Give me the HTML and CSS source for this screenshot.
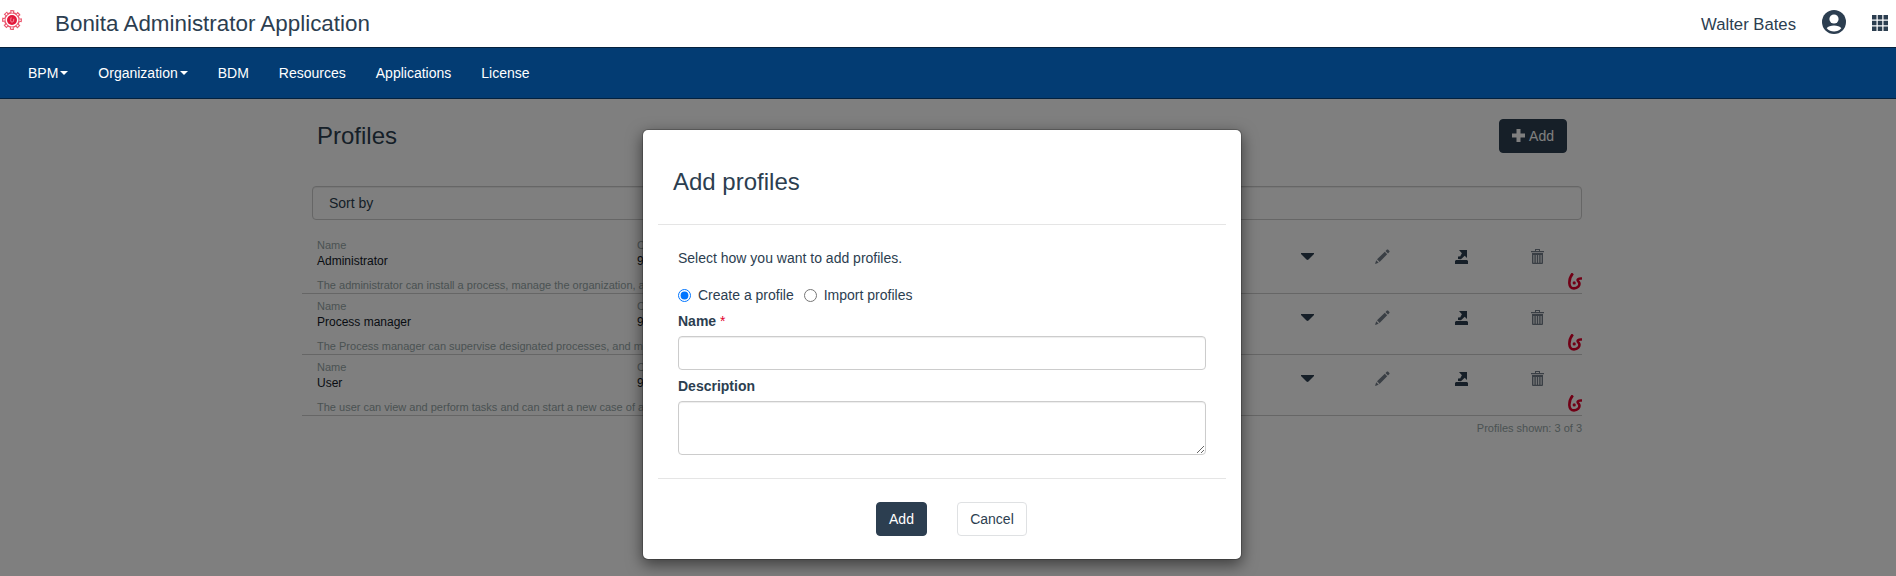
FILE: index.html
```html
<!DOCTYPE html>
<html lang="en">
<head>
<meta charset="utf-8">
<title>Bonita Administrator Application</title>
<link rel="stylesheet" href="styles.css">
</head>
<body>
<svg width="0" height="0" class="defs" aria-hidden="true">
  <symbol id="i-caret" viewBox="0 0 13 7"><path d="M0 0H13V1L7.5 6.5Q6.5 7.3 5.5 6.5L0 1Z"/></symbol>
  <symbol id="i-pencil" viewBox="0 0 15 15"><path d="M0 15L1.2 11.3L3.7 13.8ZM2 10.3L9.8 2.8L12.2 5.2L4.6 13ZM10.5 2L12 .6Q12.5 .2 13 .6L14.4 2Q14.8 2.5 14.4 3L13 4.5Z"/></symbol>
  <symbol id="i-export" viewBox="0 0 13 14"><path d="M4 0H12V8L9.7 5.8L6.8 8.6L5.9 9.2L3 9V7L4 6L5 6.8L6.9 3.2ZM1 10H12L13 11V14H0V11Z"/></symbol>
  <symbol id="i-trash" viewBox="0 0 13 15"><path fill-rule="evenodd" d="M4 0H9V2H13V3.2H0V2H4ZM5 1V2H8V1ZM1 4H12V14Q12 15 11 15H2Q1 15 1 14ZM2.4 6V13.8H3.4V6ZM4.8 6V13.8H5.8V6ZM7.2 6V13.8H8.2V6ZM9.6 6V13.8H10.6V6Z"/></symbol>
  <symbol id="i-bonita" viewBox="0 0 14 17"><path d="M4.8 .3C2.2 3.4 1.2 7 1.4 10.5C1.6 14 3.6 15.4 6 15.4C9.6 15.4 12 12.6 11.3 9.9C10.8 8.4 9.5 8 9.6 6.9C9.8 5.6 11.5 5.3 14 5.5" fill="none" stroke="#e3002b" stroke-width="2.6"/><circle cx="6.2" cy="9.9" r="1.6" fill="#e3002b"/></symbol>
</svg>

<header class="header">
  <svg class="logo" viewBox="0 0 20 20"><g fill="none"><circle cx="10" cy="10" r="8.6" stroke="#ea536b" stroke-width="2.6" stroke-dasharray="3.95 2.804" stroke-dashoffset="1.97"/><circle cx="10" cy="10" r="7.2" stroke="#ea536b" stroke-width="1.5"/><circle cx="10" cy="10" r="8" stroke="#fff" stroke-width="1.4" stroke-dasharray="1.7 4.583" stroke-dashoffset=".85"/></g><circle cx="10" cy="10" r="5" fill="#e2183b"/><path d="M9.2 7.5Q7.8 12 10 12.2T11.8 8.8" fill="none" stroke="#f28b9c" stroke-width="1"/></svg>
  <h1 class="app-title">Bonita Administrator Application</h1>
  <span class="user">Walter Bates</span>
  <svg class="avatar" viewBox="0 0 24 24"><circle cx="12" cy="12" r="12"/><circle cx="12" cy="9" r="4.6" fill="#fff"/><path d="M4.7 18.3C7 14.7 17 14.7 19.3 18.3C15.5 22.6 8.5 22.6 4.7 18.3Z" fill="#fff"/></svg>
  <svg class="apps" viewBox="0 0 16 16"><path d="M0 0h4.5v4.5H0zM5.75 0h4.5v4.5h-4.5zM11.5 0H16v4.5h-4.5zM0 5.75h4.5v4.5H0zM5.75 5.75h4.5v4.5h-4.5zM11.5 5.75H16v4.5h-4.5zM0 11.5h4.5V16H0zM5.75 11.5h4.5V16h-4.5zM11.5 11.5H16V16h-4.5z"/></svg>
</header>

<nav class="nav">
  <a>BPM<i class="caret"></i></a>
  <a>Organization<i class="caret"></i></a>
  <a>BDM</a>
  <a>Resources</a>
  <a>Applications</a>
  <a>License</a>
</nav>

<main class="page">
  <div class="content">
    <div class="toolbar">
      <h2 class="heading">Profiles</h2>
      <button class="btn primary add-profile"><svg class="plus" viewBox="0 0 13 13"><path d="M4.5 0h4v4.5H13v4H8.5V13h-4V8.5H0v-4h4.5z"/></svg>Add</button>
    </div>
    <div class="sort">Sort by</div>

    <div class="row">
      <div class="cell"><span class="label">Name</span><span>Administrator</span></div>
      <div class="cell"><span class="label">Created on</span><span>9</span></div>
      <svg class="icon caret-icon"><use href="#i-caret"/></svg>
      <svg class="icon pencil"><use href="#i-pencil"/></svg>
      <svg class="icon export"><use href="#i-export"/></svg>
      <svg class="icon trash"><use href="#i-trash"/></svg>
      <svg class="brand"><use href="#i-bonita"/></svg>
      <p class="desc">The administrator can install a process, manage the organization, a</p>
    </div>
    <div class="row">
      <div class="cell"><span class="label">Name</span><span>Process manager</span></div>
      <div class="cell"><span class="label">Created on</span><span>9</span></div>
      <svg class="icon caret-icon"><use href="#i-caret"/></svg>
      <svg class="icon pencil"><use href="#i-pencil"/></svg>
      <svg class="icon export"><use href="#i-export"/></svg>
      <svg class="icon trash"><use href="#i-trash"/></svg>
      <svg class="brand"><use href="#i-bonita"/></svg>
      <p class="desc">The Process manager can supervise designated processes, and m</p>
    </div>
    <div class="row">
      <div class="cell"><span class="label">Name</span><span>User</span></div>
      <div class="cell"><span class="label">Created on</span><span>9</span></div>
      <svg class="icon caret-icon"><use href="#i-caret"/></svg>
      <svg class="icon pencil"><use href="#i-pencil"/></svg>
      <svg class="icon export"><use href="#i-export"/></svg>
      <svg class="icon trash"><use href="#i-trash"/></svg>
      <svg class="brand"><use href="#i-bonita"/></svg>
      <p class="desc">The user can view and perform tasks and can start a new case of a</p>
    </div>
    <p class="count">Profiles shown: 3 of 3</p>
  </div>

  <div class="backdrop">
    <form class="modal">
      <h3 class="modal-title">Add profiles</h3>
      <div class="modal-body">
        <p class="hint">Select how you want to add profiles.</p>
        <div class="options">
          <label class="option"><input type="radio" name="mode" checked>Create a profile</label>
          <label class="option"><input type="radio" name="mode">Import profiles</label>
        </div>
        <label class="field-label" for="name">Name <span class="required">*</span></label>
        <input class="control" id="name" type="text">
        <label class="field-label second" for="description">Description</label>
        <textarea class="control area" id="description"></textarea>
      </div>
      <div class="modal-footer">
        <button type="button" class="btn primary">Add</button>
        <button type="button" class="btn cancel">Cancel</button>
      </div>
    </form>
  </div>
</main>
</body>
</html>
```
FILE: styles.css
```css
* { box-sizing: border-box; }
body {
  margin: 0;
  height: 576px;
  overflow: hidden;
  display: flex;
  flex-direction: column;
  background: #fff;
  color: #2c3e50;
  font: 14px/20px "Liberation Sans", Arial, sans-serif;
}
h1, h2, h3, p { margin: 0; font-weight: 400; }
svg { display: block; fill: #2c3e50; flex: none; }
.defs { position: absolute; }

.header { height: 47px; display: flex; align-items: flex-start; padding: 0 8px 0 0; }
.logo { width: 20px; height: 20px; margin: 10px 0 0 2px; }
.app-title { margin: 11px auto 0 33px; font-size: 22.4px; line-height: 25px; }
.user { margin-top: 15px; font-size: 16.7px; }
.avatar { width: 24px; height: 24px; margin: 10px 26px 0 26px; }
.apps { width: 16px; height: 16px; margin-top: 15px; }

.nav {
  height: 52px;
  display: flex;
  align-items: center;
  padding-left: 13px;
  background: #033c73;
  border: solid #04223f;
  border-width: 1px 0;
  color: #fff;
}
.nav a { display: flex; align-items: center; padding: 0 15px; }
.caret { border: 4px solid transparent; border-top-color: #fff; border-bottom: 0; margin-left: 2px; }

.page { position: relative; flex: 1; }
.content { width: 1280px; margin-left: 302px; }
.toolbar { height: 87px; display: flex; justify-content: space-between; padding: 20px 15px 0; }
.heading { font-size: 24px; line-height: 26px; margin-top: 4px; }
.btn {
  height: 34px;
  padding: 0 12px;
  border: 1px solid #dfe1e3;
  border-radius: 4px;
  background: #fff;
  color: #2c3e50;
  font: inherit;
}
.primary { background: #2c3e50; border-color: #2c3e50; color: #fff; }
.cancel { width: 70px; }
.add-profile { display: flex; align-items: center; gap: 4px; }
.plus { width: 13px; height: 13px; fill: #fff; margin-top: -1px; }
.sort {
  height: 34px;
  margin-left: 10px;
  padding: 6px 16px;
  border: 1px solid #ccc;
  border-radius: 4px;
  box-shadow: inset 0 1px 1px rgba(0, 0, 0, .075);
  margin-bottom: 13px;
}
.row {
  height: 61px;
  display: grid;
  grid-template: 40px 16px / 320px 664px 74px 80px 76px 37px 14px;
  padding: 4px 0 0 15px;
  border-bottom: 1px solid #ccc;
  font-size: 12px;
  line-height: 16px;
}
.cell { display: flex; flex-direction: column; color: #111827; }
.label, .desc, .count { color: #95a5a6; font-size: 11px; }
.desc { grid-row: 2; grid-column: 1 / 3; white-space: nowrap; }
.icon { width: 13px; height: 15px; margin-top: 12px; }
.caret-icon { height: 7px; margin-top: 16px; }
.pencil { width: 15px; fill: #747f8a; }
.export { height: 14px; margin-top: 13px; }
.trash { fill: #747f8a; }
.brand { width: 14px; height: 17px; grid-column: 7; grid-row: 1 / 3; align-self: end; margin-bottom: 3px; }
.count { padding-top: 4px; text-align: right; line-height: 16px; }

.backdrop { position: absolute; inset: 0; background: rgba(0, 0, 0, .5); padding: 30px 0 0 642px; }
.modal {
  width: 600px;
  height: 431px;
  border: 1px solid rgba(0, 0, 0, .2);
  border-radius: 6px;
  background: #fff;
  background-clip: padding-box;
  box-shadow: 0 5px 15px rgba(0, 0, 0, .5);
  padding: 0 15px;
}
.modal-title { height: 95px; padding: 39px 15px 0; font-size: 24px; line-height: 26px; border-bottom: 1px solid #e5e5e5; }
.modal-body { height: 253px; padding: 23px 20px 0; }
.options { display: flex; gap: 10px; margin-top: 17px; }
.option { display: flex; align-items: center; }
.option input { width: 13px; height: 13px; margin: 1px 7px 0 0; }
.field-label { display: block; margin-top: 6px; font-weight: 700; }
.required { color: #e3002b; font-weight: 400; }
.control {
  display: block;
  width: 528px;
  height: 34px;
  margin-top: 5px;
  border: 1px solid #ccc;
  border-radius: 4px;
  box-shadow: inset 0 1px 1px rgba(0, 0, 0, .075);
  background: #fff;
}
.second { margin-top: 6px; }
.area { height: 54px; }
.modal-footer { display: flex; justify-content: center; gap: 30px; padding: 23px 0 0 19px; border-top: 1px solid #e5e5e5; }
```
